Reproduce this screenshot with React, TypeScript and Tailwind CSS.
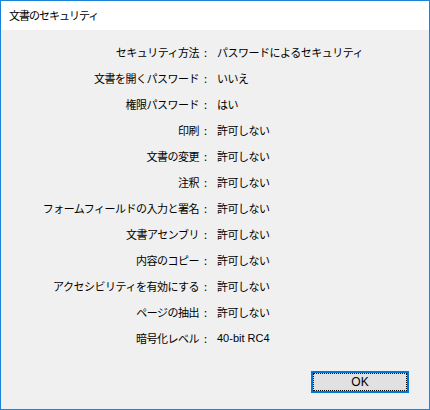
const rows: [string, string][] = [
  ['セキュリティ方法', 'パスワードによるセキュリティ'],
  ['文書を開くパスワード', 'いいえ'],
  ['権限パスワード', 'はい'],
  ['印刷', '許可しない'],
  ['文書の変更', '許可しない'],
  ['注釈', '許可しない'],
  ['フォームフィールドの入力と署名', '許可しない'],
  ['文書アセンブリ', '許可しない'],
  ['内容のコピー', '許可しない'],
  ['アクセシビリティを有効にする', '許可しない'],
  ['ページの抽出', '許可しない'],
  ['暗号化レベル', '40-bit RC4'],
];

const jp = "font-['Noto_Sans_CJK_JP',sans-serif]";

export default function App() {
  return (
    <div className={`w-[430px] h-[410px] flex flex-col border border-[#1a82d8] bg-[#f0f0f0] text-black ${jp}`}>
      {/* Title bar */}
      <div className="h-[29px] bg-white flex items-center pl-[8px] text-[11px] tracking-[-1px]">
        文書のセキュリティ
      </div>

      {/* Content */}
      <div className="flex-1 flex flex-col pt-[9px]">
        <div className="grid grid-cols-[198px_18px_1fr]">
          {rows.map(([label, value]) => (
            <div key={label} className="contents">
              <div className="h-[26px] flex items-center justify-end text-[11px] tracking-[-0.5px]">{label}</div>
              <div className="h-[26px] flex items-center pl-[5px] text-[11px]">:</div>
              <div
                className={`h-[26px] flex items-center ${
                  value === '40-bit RC4'
                    ? "font-['Liberation_Sans',sans-serif] text-[11px]"
                    : 'text-[11px] tracking-[-0.5px]'
                }`}
              >
                {value}
              </div>
            </div>
          ))}
        </div>

        <div className="flex justify-end pr-[20px] mt-[20px]">
          <button className="w-[98px] h-[22px] border-2 border-[#0078d7] bg-[#e1e1e1] flex p-0">
            <span className="flex-1 flex items-center justify-center border border-dotted border-black font-['Liberation_Sans',sans-serif] text-[12px]">
              OK
            </span>
          </button>
        </div>
      </div>
    </div>
  );
}
